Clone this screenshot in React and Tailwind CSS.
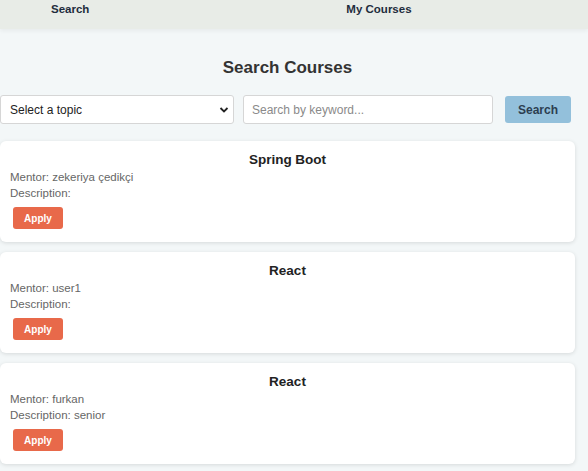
import React from "react";

const courses = [
  { title: "Spring Boot", mentor: "zekeriya çedikçi", description: "" },
  { title: "React", mentor: "user1", description: "" },
  { title: "React", mentor: "furkan", description: "senior" },
];

function CourseCard({ course }) {
  return (
    <div className="bg-white rounded-[6px] shadow-[0_1px_4px_rgba(0,0,0,0.12)] px-[10px] pt-[10px] pb-[13px]">
      <h3 className="text-center text-[13.5px] leading-[18px] font-bold text-[#222]">{course.title}</h3>
      <p className="text-[11.5px] leading-[16px] text-[#666]">Mentor: {course.mentor}</p>
      <p className="text-[11.5px] leading-[16px] text-[#666]">Description: {course.description}</p>
      <button className="mt-[6px] ml-[3px] h-[22px] w-[50px] rounded-[3px] bg-[#e8694a] text-white text-[10px] font-bold">
        Apply
      </button>
    </div>
  );
}

export default function App() {
  return (
    <div className="min-h-[471px] bg-[#f3f7f8] font-['Liberation_Sans',Arial,sans-serif]">
      <nav className="h-[29px] bg-[#e8ece7] flex items-start pt-[2px] pl-[51px] gap-[257px] shadow-[0_2px_4px_rgba(0,0,0,0.05)]">
        <a className="text-[11.5px] font-bold text-[#1f2d3d] leading-[14px]">Search</a>
        <a className="text-[11.5px] font-bold text-[#1f2d3d] leading-[14px]">My Courses</a>
      </nav>

      <div className="pr-[13px]">
        <h2 className="mt-[28px] text-center text-[17px] leading-[22px] font-bold text-[#333]">Search Courses</h2>

        <div className="mt-[16px] flex items-center">
          <div className="relative w-[234px]">
            <select className="appearance-none w-full h-[29px] rounded-[3px] border border-[#d6d6d6] bg-white pl-[9px] text-[12px] text-[#222] outline-none">
              <option>Select a topic</option>
            </select>
            <svg className="absolute right-[5px] top-[10px] w-[10px] h-[10px]" viewBox="0 0 10 10" fill="none">
              <path d="M1.5 3 L5 6.5 L8.5 3" stroke="#222" strokeWidth="1.8" />
            </svg>
          </div>
          <input
            placeholder="Search by keyword..."
            className="ml-[9px] w-[250px] h-[29px] rounded-[3px] border border-[#d6d6d6] bg-white pl-[8px] text-[12px] placeholder:text-[#8a8a8a] outline-none"
          />
          <button className="ml-[12px] w-[66px] h-[27px] rounded-[3px] bg-[#93c0db] text-[12px] font-bold text-[#2c3e50]">
            Search
          </button>
        </div>

        <div className="mt-[17px] flex flex-col gap-[10px]">
          {courses.map((c, i) => (
            <CourseCard key={i} course={c} />
          ))}
        </div>
      </div>
    </div>
  );
}
